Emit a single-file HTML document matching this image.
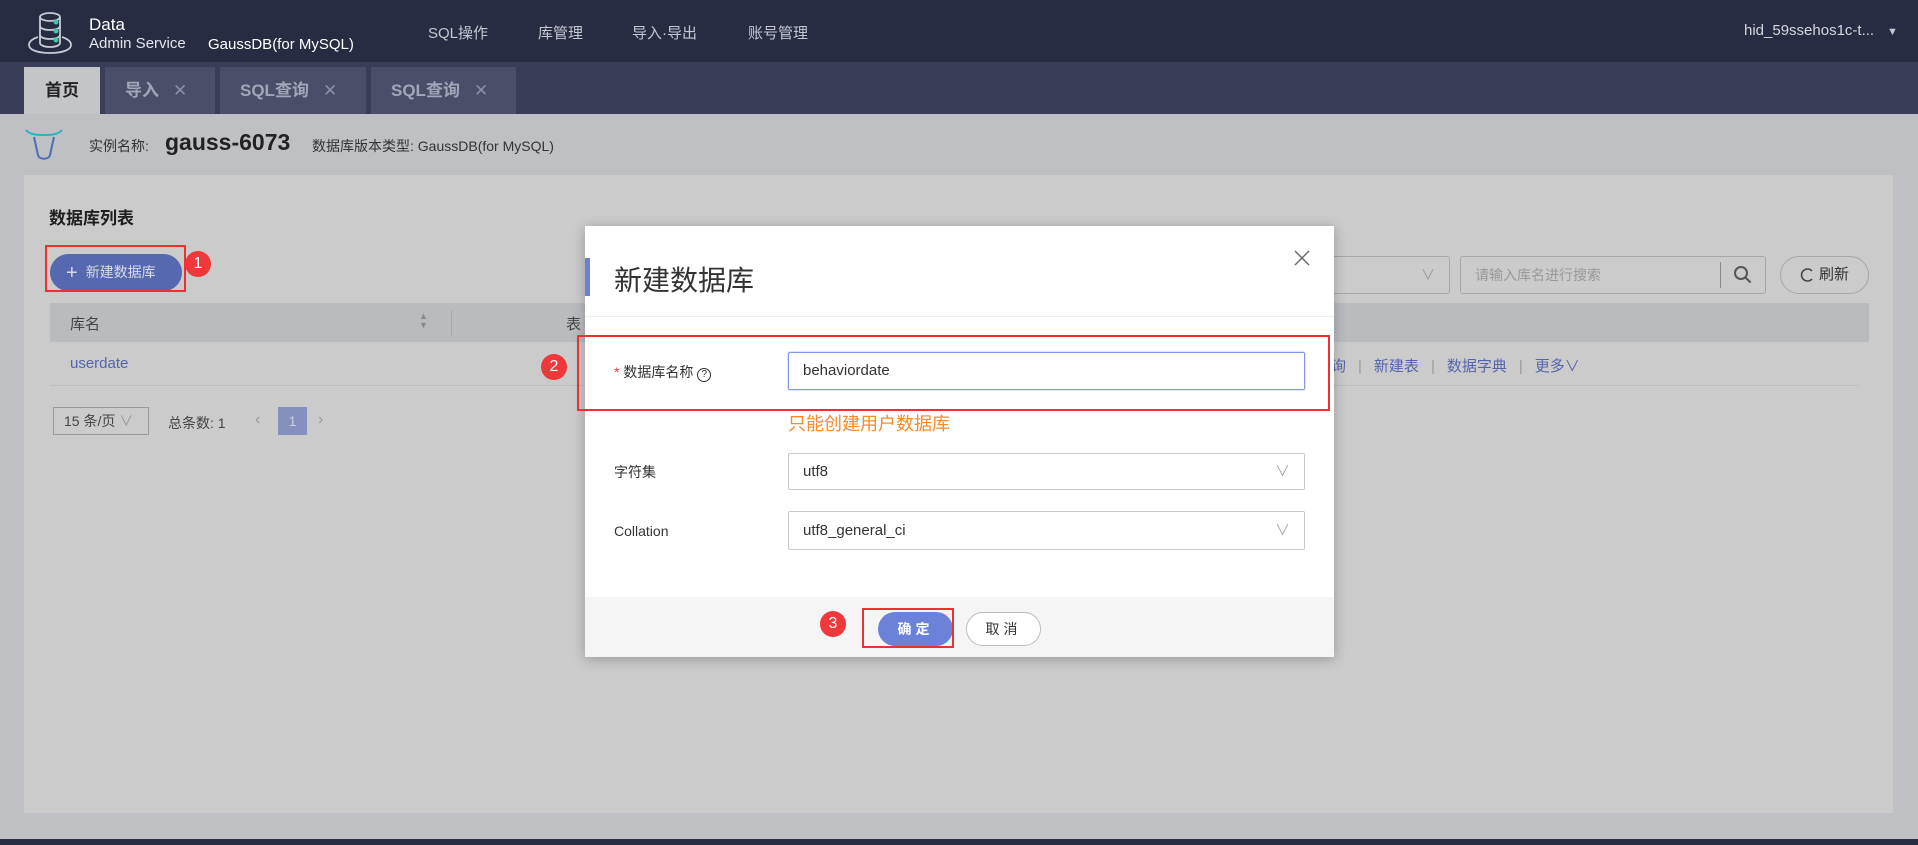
<!DOCTYPE html>
<html><head><meta charset="utf-8"><style>
*{margin:0;padding:0;box-sizing:border-box}
body{width:1918px;height:845px;overflow:hidden;position:relative;background:#bfc0c4;font-family:"Liberation Sans","Noto Sans CJK SC",sans-serif;color:#333}
.a{position:absolute;white-space:nowrap}
.badge{position:absolute;width:26px;height:26px;border-radius:50%;background:#f0373a;color:#fff;font-size:16px;text-align:center;line-height:26px}
.red{position:absolute;border:2px solid #ee3030}
.sel{position:absolute;background:#fff;border:1px solid #c9c9c9;border-radius:2px;font-size:15px;color:#333;padding-left:14px}
.x{font-weight:normal;margin-left:14px;color:#8c8fa3}
</style></head><body>
<div class="a" style="left:0;top:0;width:1918px;height:62px;background:#272c42"></div>
<svg class="a" style="left:26px;top:11px" width="48" height="44" viewBox="0 0 48 44" fill="none" stroke="#c7cad4" stroke-width="1.8">
<ellipse cx="24" cy="6" rx="10" ry="4"/><path d="M14 6v26c0 2 4 4 10 4s10-2 10-4V6"/><path d="M14 15c0 2 4 4 10 4s10-2 10-4M14 24c0 2 4 4 10 4s10-2 10-4"/>
<path d="M12 26c-6 2-9 5-9 8 0 5 9 8 21 8s21-3 21-8c0-3-3-6-9-8"/>
<circle cx="30" cy="11" r="2.5" fill="#3ec6a8" stroke="none"/><circle cx="30" cy="20" r="2.5" fill="#3ec6a8" stroke="none"/><circle cx="30" cy="29" r="2.5" fill="#3ec6a8" stroke="none"/></svg>
<div class="a" style="left:89px;top:15px;color:#fff;font-size:17px">Data</div>
<div class="a" style="left:89px;top:35px;color:#e6e7ec;font-size:15px">Admin Service</div>
<div class="a" style="left:208px;top:36px;color:#fff;font-size:15px">GaussDB(for MySQL)</div>
<div class="a" style="left:428px;top:22px;color:#c5c7d2;font-size:15px">SQL操作</div>
<div class="a" style="left:538px;top:22px;color:#c5c7d2;font-size:15px">库管理</div>
<div class="a" style="left:632px;top:22px;color:#c5c7d2;font-size:15px">导入·导出</div>
<div class="a" style="left:748px;top:22px;color:#c5c7d2;font-size:15px">账号管理</div>
<div class="a" style="left:1744px;top:22px;color:#d5d7de;font-size:15px">hid_59ssehos1c-t...</div>
<div class="a" style="left:1887px;top:26px;color:#c5c7d2;font-size:11px">▼</div>

<div class="a" style="left:0;top:62px;width:1918px;height:52px;background:#393d58"></div>
<div class="a" style="left:24px;top:67px;width:76px;height:47px;background:#c4c5c9;font-size:17px;font-weight:bold;color:#222;text-align:center;line-height:47px">首页</div>
<div class="a" style="left:105px;top:67px;width:110px;height:47px;background:#4a4e69;font-size:17px;font-weight:bold;color:#a3a6b8;line-height:47px;padding-left:20px">导入<span class="x">✕</span></div>
<div class="a" style="left:220px;top:67px;width:146px;height:47px;background:#4a4e69;font-size:17px;font-weight:bold;color:#a3a6b8;line-height:47px;padding-left:20px">SQL查询<span class="x">✕</span></div>
<div class="a" style="left:371px;top:67px;width:145px;height:47px;background:#4a4e69;font-size:17px;font-weight:bold;color:#a3a6b8;line-height:47px;padding-left:20px">SQL查询<span class="x">✕</span></div>

<svg class="a" style="left:24px;top:128px" width="40" height="34" viewBox="0 0 40 34" fill="none" stroke-width="2"><path d="M2 2c4 5 12 5 18 5s14 0 18-5" stroke="#2fb2c4"/><path d="M10 9l4 18c1 5 11 5 12 0l4-18" stroke="#4a6fb6"/></svg>
<div class="a" style="left:89px;top:136px;font-size:14px;color:#333">实例名称:</div>
<div class="a" style="left:165px;top:129px;font-size:23px;font-weight:bold;color:#222">gauss-6073</div>
<div class="a" style="left:312px;top:136px;font-size:14px;color:#333">数据库版本类型: GaussDB(for MySQL)</div>

<div class="a" style="left:24px;top:175px;width:1869px;height:638px;background:#cbcbcb"></div>
<div class="a" style="left:49px;top:204px;font-size:17px;font-weight:bold;color:#1f1f1f">数据库列表</div>
<div class="a" style="left:50px;top:254px;width:132px;height:37px;border-radius:19px;background:#5568b0;color:#d8dbe8;font-size:14px;line-height:37px;padding-left:16px"><span style="font-size:20px;vertical-align:-2px;margin-right:8px">+</span>新建数据库</div>
<div class="red" style="left:45px;top:245px;width:141px;height:47px"></div>
<div class="badge" style="left:185px;top:251px">1</div>
<div class="a" style="left:50px;top:303px;width:1819px;height:39px;background:#b9bcbf"></div>
<div class="a" style="left:70px;top:313px;font-size:15px;color:#444">库名</div>
<div class="a" style="left:419px;top:312px;font-size:9px;color:#888;line-height:9px">▲<br>▼</div>
<div class="a" style="left:451px;top:310px;width:1px;height:26px;background:#aaa"></div>
<div class="a" style="left:566px;top:313px;font-size:15px;color:#444">表</div>
<div class="a" style="left:70px;top:355px;font-size:15px;color:#5564ad">userdate</div>
<div class="a" style="left:1331px;top:355px;font-size:15px;color:#5564ad">询<span style="color:#999;margin:0 12px">|</span>新建表<span style="color:#999;margin:0 12px">|</span>数据字典<span style="color:#999;margin:0 12px">|</span>更多∨</div>
<div class="a" style="left:50px;top:385px;width:1809px;height:1px;background:#bdbdbd"></div>
<div class="a" style="left:53px;top:407px;width:96px;height:28px;border:1px solid #999;font-size:14px;color:#444;line-height:26px;padding-left:10px">15 条/页 <span style="color:#999">∨</span></div>
<div class="a" style="left:168px;top:413px;font-size:14px;color:#444">总条数: 1</div>
<div class="a" style="left:255px;top:411px;font-size:16px;color:#999">‹</div>
<div class="a" style="left:278px;top:407px;width:29px;height:28px;background:#8590bf;color:#c9cde0;font-size:14px;text-align:center;line-height:28px">1</div>
<div class="a" style="left:318px;top:411px;font-size:16px;color:#999">›</div>
<div class="a" style="left:1300px;top:256px;width:150px;height:38px;border:1px solid #a6a6a6;border-radius:3px;color:#999;font-size:14px;line-height:36px;text-align:right;padding-right:14px">∨</div>
<div class="a" style="left:1460px;top:256px;width:306px;height:38px;border:1px solid #a6a6a6;border-radius:3px;color:#999;font-size:14px;line-height:36px;padding-left:14px">请输入库名进行搜索</div>
<div class="a" style="left:1720px;top:262px;width:1px;height:26px;background:#888"></div>
<svg class="a" style="left:1733px;top:265px" width="20" height="20" viewBox="0 0 20 20" fill="none" stroke="#555" stroke-width="2"><circle cx="8" cy="8" r="6"/><path d="M12.5 12.5l5 5"/></svg>
<div class="a" style="left:1780px;top:256px;width:89px;height:38px;border:1px solid #a6a6a6;border-radius:19px;color:#333;font-size:15px;line-height:36px;padding-left:38px">刷新</div>
<svg class="a" style="left:1799px;top:267px" width="16" height="16" viewBox="0 0 16 16" fill="none" stroke="#444" stroke-width="1.6"><path d="M13 4A6 6 0 1 0 13 12"/></svg>

<div class="a" style="left:0;top:839px;width:1918px;height:6px;background:#272c42"></div>

<div class="a" style="left:585px;top:226px;width:749px;height:431px;background:#fff;box-shadow:0 2px 12px rgba(0,0,0,.25)"></div>
<div class="a" style="left:585px;top:258px;width:5px;height:38px;background:#6b7fd7"></div>
<div class="a" style="left:614px;top:259px;font-size:28px;color:#333">新建数据库</div>
<svg class="a" style="left:1294px;top:250px" width="16" height="16" viewBox="0 0 16 16" stroke="#666" stroke-width="1.4"><path d="M1 1l14 14M15 1L1 15"/></svg>
<div class="a" style="left:585px;top:316px;width:749px;height:1px;background:#eee"></div>
<div class="a" style="left:614px;top:362px;font-size:14px;color:#333"><span style="color:#f0373a">*</span> 数据库名称 <span style="display:inline-block;width:14px;height:14px;border:1px solid #333;border-radius:50%;font-size:10px;text-align:center;line-height:12px">?</span></div>
<div class="a" style="left:788px;top:352px;width:517px;height:38px;border:1px solid #8497e3;border-radius:2px;box-shadow:0 0 0 1px #dfe5fa;font-size:15px;color:#333;line-height:36px;padding-left:14px">behaviordate</div>
<div class="red" style="left:577px;top:335px;width:753px;height:76px"></div>
<div class="badge" style="left:541px;top:354px">2</div>
<div class="a" style="left:788px;top:410px;font-size:18px;color:#f78a2a">只能创建用户数据库</div>
<div class="a" style="left:614px;top:462px;font-size:14px;color:#333">字符集</div>
<div class="sel" style="left:788px;top:453px;width:517px;height:37px;line-height:35px">utf8<span style="position:absolute;right:14px;color:#aaa">∨</span></div>
<div class="a" style="left:614px;top:523px;font-size:14px;color:#333">Collation</div>
<div class="sel" style="left:788px;top:511px;width:517px;height:39px;line-height:37px">utf8_general_ci<span style="position:absolute;right:14px;color:#aaa">∨</span></div>
<div class="a" style="left:585px;top:597px;width:749px;height:60px;background:#f5f5f5"></div>
<div class="a" style="left:878px;top:612px;width:75px;height:34px;border-radius:17px;background:#6b82d8;color:#fff;font-size:14px;font-weight:bold;text-align:center;line-height:34px;letter-spacing:4px">确定</div>
<div class="red" style="left:862px;top:608px;width:92px;height:40px"></div>
<div class="badge" style="left:820px;top:611px">3</div>
<div class="a" style="left:966px;top:612px;width:75px;height:34px;border-radius:17px;border:1px solid #bbb;background:#fff;color:#333;font-size:14px;text-align:center;line-height:32px;letter-spacing:4px">取消</div>
</body></html>
